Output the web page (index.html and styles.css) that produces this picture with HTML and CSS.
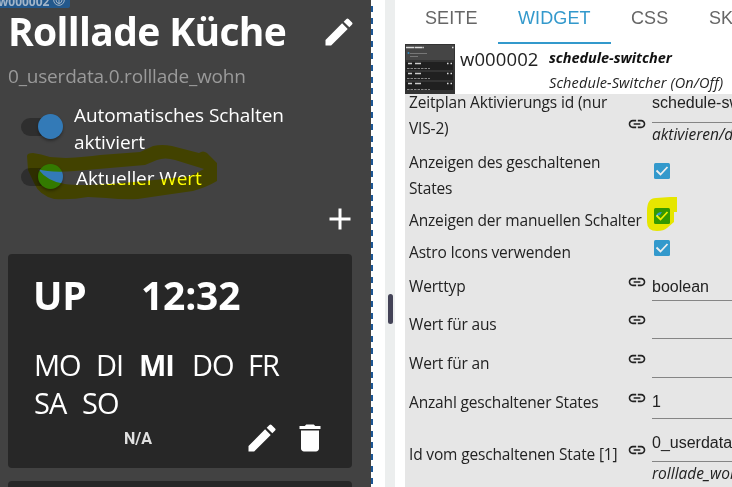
FILE: index.html
```html
<!DOCTYPE html>
<html lang="de">
<head>
<meta charset="utf-8">
<title>Schedule-Switcher</title>
<link rel="stylesheet" href="styles.css">
</head>
<body>
<svg class="defs" width="0" height="0">
  <symbol id="pencil" viewBox="0 0 24 24"><path d="M3 17.25V21h3.75L17.81 9.94l-3.75-3.75L3 17.25zM20.71 7.04a1 1 0 0 0 0-1.41l-2.34-2.34a1 1 0 0 0-1.41 0l-1.83 1.83 3.75 3.75 1.83-1.83z"/></symbol>
  <symbol id="trash" viewBox="0 0 24 24"><path d="M6 19c0 1.100.9 2 2 2h8c1.100 0 2-.9 2-2V7H6v12zM19 4h-3.500l-1-1h-5l-1 1H5v2h14V4z"/></symbol>
  <symbol id="plus" viewBox="0 0 24 24"><path d="M19 13h-6v6h-2v-6H5v-2h6V5h2v6h6v2z"/></symbol>
  <symbol id="link" viewBox="0 0 24 24"><path d="M3.900 12c0-1.710 1.390-3.100 3.100-3.100h4V7H7c-2.760 0-5 2.240-5 5s2.240 5 5 5h4v-1.900H7c-1.710 0-3.100-1.390-3.100-3.100zM8 13h8v-2H8v2zm9-6h-4v1.900h4c1.710 0 3.100 1.390 3.100 3.100s-1.390 3.100-3.100 3.100h-4V17h4c2.760 0 5-2.240 5-5s-2.240-5-5-5z"/></symbol>
</svg>
<div class="app">
  <section class="widget">
    <div class="badge"><span>w000002</span><svg viewBox="0 0 14 14"><circle cx="7" cy="7" r="5.300"/><path d="M7 3v8M4 7q0 3 3 3.500Q10 10 10 7"/></svg></div>
    <header class="head"><h1>Rolllade Küche</h1><svg class="ico"><use href="#pencil"/></svg></header>
    <div class="oid">0_userdata.0.rolllade_wohn</div>
    <div class="toggle first"><i class="switch"></i><span>Automatisches Schalten<br>aktiviert</span></div>
    <div class="toggle second"><i class="switch"></i><span>Aktueller Wert</span></div>
    <div class="add"><svg class="ico"><use href="#plus"/></svg></div>
    <article class="card">
      <div class="trigger"><b class="action">UP</b><b class="time">12:32</b></div>
      <div class="days"><div><span class="mo">MO</span><span class="di">DI</span><b class="mi">MI</b><span class="do">DO</span><span class="fr">FR</span></div><div><span class="sa">SA</span><span class="so">SO</span></div></div>
      <div class="actions"><span class="na">N/A</span><svg class="ico"><use href="#pencil"/></svg><svg class="ico del"><use href="#trash"/></svg></div>
    </article>
    <article class="card next"></article>
    <svg class="marker" viewBox="0 0 240 120"><path fill-rule="evenodd" d="M27 56Q27 53 33 53Q41 54 50 57L66 58Q85 57 100 55L140 52Q147 49 153 46Q162 44 172 46L199 53Q203 50 207 53L217 63V81Q207 87 193 91L165 95L138 99Q125 100 106 98L88 97Q72 100 54 99Q39 95 34 83L28 70ZM38 69Q50 73 75 71L110 68L145 65L157 60Q165 57 175 60L204 69L190 76L163 79L145 81L110 84Q80 86 65 84Q48 82 38 69Z"/></svg>
  </section>
  <div class="dash"></div>
  <div class="gutter"><i></i></div>
  <aside class="panel">
    <nav class="tabs"><span class="t1">SEITE</span><span class="t2">WIDGET</span><span class="t3">CSS</span><span class="t4">SKRIPTE</span></nav>
    <div class="info">
      <svg class="thumb" viewBox="0 0 50 50"><path fill="#333" d="M0 0h50v50H0z"/><path fill="#454545" d="M1 1h48v15H1z"/><path fill="#202020" d="M1 18h47v8H1zM1 28h47v8H1zM1 38h47v8H1z"/><path stroke="#ddd" stroke-width="1.500" stroke-dasharray="8 .6" d="M1 3.500h18"/><path stroke="#ccc" stroke-width="1.300" stroke-dasharray="4 3 6 30" d="M3 19.500h20M3 29.500h20M3 39.500h20"/><path stroke="#888" stroke-dasharray="2.500 1" d="M2 24.500h23M2 34.500h23M2 45.500h23"/><path stroke="#777" d="M5 9.500h17M5 12.500h8"/><path stroke="#ddd" stroke-width="1.500" stroke-dasharray="1.500 2" d="M42 19.500h5M42 29.500h5M42 39.500h5M47 3.500h2"/><circle cx="3.500" cy="9" r="1" fill="#38b"/></svg>
      <span class="wid">w000002</span>
      <div class="names"><b>schedule-switcher</b><span>Schedule-Switcher (On/Off)</span></div>
    </div>
    <div class="form">
      <div class="row r1"><label>Zeitplan Aktivierungs id (nur<br>VIS-2)</label><svg class="link"><use href="#link"/></svg><div class="field"><div class="val">schedule-switcher</div><em>aktivieren/deaktivieren</em></div></div>
      <div class="row r2"><label>Anzeigen des geschaltenen<br>States</label><span></span><svg class="check" viewBox="0 0 16 16"><rect width="16" height="16" rx="1.500"/><path d="M2.500 7.500l4 4L13.500 4"/></svg></div>
      <div class="row r3"><label>Anzeigen der manuellen Schalter</label><span></span><svg class="check" viewBox="0 0 16 16"><rect width="16" height="16" rx="1.500"/><path d="M2.500 7.500l4 4L13.500 4"/></svg></div>
      <div class="row r4"><label>Astro Icons verwenden</label><span></span><svg class="check" viewBox="0 0 16 16"><rect width="16" height="16" rx="1.500"/><path d="M2.500 7.500l4 4L13.500 4"/></svg></div>
      <div class="row r5"><label>Werttyp</label><svg class="link"><use href="#link"/></svg><div class="field"><div class="val">boolean</div></div></div>
      <div class="row r6"><label>Wert für aus</label><svg class="link"><use href="#link"/></svg><div class="field"><div class="val"></div></div></div>
      <div class="row r7"><label>Wert für an</label><svg class="link"><use href="#link"/></svg><div class="field"><div class="val"></div></div></div>
      <div class="row r8"><label>Anzahl geschaltener States</label><svg class="link"><use href="#link"/></svg><div class="field"><div class="val">1</div></div></div>
      <div class="row r9"><label>Id vom geschaltenen State [1]</label><svg class="link"><use href="#link"/></svg><div class="field"><div class="val">0_userdata.0</div><em>rolllade_wohn</em></div></div>
    </div>
    <svg class="marker2" viewBox="0 0 31 36"><path fill-rule="evenodd" d="M0 14Q0 1 9 1L23 0H30V15H27V25L20 31Q17 34 10 34Q0 34 0 25ZM9 19Q10 15 15 15L13 18Z"/></svg>
  </aside>
</div>
</body>
</html>
```
FILE: styles.css
```css
* { box-sizing: border-box; }
body { margin: 0; background: #fff; font-family: "Open Sans", "Noto Sans", sans-serif; }
.defs { position: absolute; }
.app { display: flex; width: 732px; height: 487px; overflow: hidden; white-space: nowrap; }
.ico { width: 36px; height: 36px; fill: #fff; flex: none; }

/* widget preview */
.widget { position: relative; width: 371px; height: 487px; flex: none; background: #424242; color: #fff; overflow: hidden; isolation: isolate; }
.badge { height: 8px; width: 70px; background: #23588c; color: #a3b5c8; border-radius: 0 0 2px 0; display: flex; align-items: flex-end; overflow: hidden; font: bold 12px/14px "Open Sans", sans-serif; }
.badge span { width: 52px; margin: 0 0 -1px -2px; flex: none; }
.badge svg { width: 14px; height: 14px; flex: none; margin: 0 0 1px 2px; fill: none; stroke: #a3b5c8; }
.head { display: flex; height: 48px; padding: 0 14px 0 8px; justify-content: space-between; }
.head h1 { margin: -4px 0 0; font-size: 39px; line-height: 54px; font-weight: 700; letter-spacing: -0.65px; }
.head .ico { margin-top: 6px; }
.oid { height: 44px; padding-left: 8px; font-size: 19px; line-height: 41px; color: #9a9a9a; letter-spacing: -0.2px; }
.toggle { display: flex; padding-left: 21px; font-size: 19px; line-height: 27px; letter-spacing: -0.08px; }
.first { height: 64px; margin-top: 2px; }
.second { height: 38px; }
.second span { margin-top: -1px; }
.switch { display: flow-root; width: 36px; height: 18px; margin: 16px 17px 0 0; border-radius: 9px; background: #2e2e2e; flex: none; }
.switch::after { content: ""; display: block; width: 25px; height: 25px; margin: -4px 0 0 17px; border-radius: 50%; background: #337ab7; box-shadow: 0 2px 3px #0005; }
.second .switch { margin: 2px 19px 0 0; }
.add { display: flex; justify-content: flex-end; height: 50px; padding-right: 13px; }
.add .ico { margin-top: -3px; }
.card { height: 214px; margin: 0 19px 13px 8px; padding: 17px 26px 0; border-radius: 4px; background: #272727; }
.trigger { display: flex; font-size: 39px; line-height: 48px; letter-spacing: -0.2px; }
.action { width: 108px; margin-left: -1px; }
.days { margin-top: 27px; font-size: 29px; line-height: 38px; letter-spacing: -1px; }
.days div { display: flex; }
.mo { width: 62px; } .di { width: 43px; } .mi { width: 53px; } .do { width: 56px; } .sa { width: 48px; }
.mi { font-weight: 700; }
.actions { display: flex; align-items: center; margin-top: -2px; }
.na { width: 31px; margin: 2px 89px 0 90px; flex: none; font: bold 16px/24px Roboto, sans-serif; color: #e0e0e0; }
.del { margin-left: 12px; }
.marker { position: absolute; left: 0; top: 100px; width: 240px; height: 120px; fill: #ff0; mix-blend-mode: multiply; }
.dash { width: 2px; height: 487px; flex: none; background: repeating-linear-gradient(#fff 0 6px, #1d5796 6px 12px, #fff 12px 11.8px); background: repeating-linear-gradient(#fff 0 5.8px, #1d5796 5.8px 11.8px); }
.gutter { width: 10px; margin: 0 10px 0 12px; flex: none; background: #eceeee; }
.gutter i { display: block; width: 5px; height: 30px; margin: 294px 0 0 3px; border-radius: 3px; background: #444357; }

/* attribute panel */
.panel { position: relative; width: 327px; flex: none; overflow: hidden; isolation: isolate; background: #fff; color: #222; }
.tabs { display: flex; height: 44px; font: 18px/36px "Liberation Sans", sans-serif; letter-spacing: .1px; color: #666; }
.tabs span { flex: none; }
.t1 { width: 93px; padding-left: 20px; }
.tabs .t2 { width: 113px; padding-left: 20px; color: #3399cc; border-bottom: 2px solid #3399cc; }
.t3 { width: 98px; padding-left: 20px; }
.info { display: flex; height: 50px; }
.thumb { width: 50px; height: 50px; flex: none; }
.wid { width: 94px; padding-left: 5px; font-size: 18.5px; line-height: 30px; letter-spacing: .1px; flex: none; }
.names { display: flex; flex-direction: column; font-size: 14.500px; font-style: italic; line-height: 24px; }
.names span { letter-spacing: .12px; }
.names b { line-height: 27px; color: #111; letter-spacing: -0.05px; }
.form { height: 393px; background: #e6e6e6; overflow: hidden; font-size: 16px; }
.row { display: grid; grid-template-columns: 222px 25px 1fr; align-items: start; }
label { padding-left: 4px; font-size: 15.5px; line-height: 26px; letter-spacing: -0.16px; }
.link { width: 20px; height: 20px; fill: #222; }
.field { font-family: "Liberation Sans", sans-serif; }
.val { height: 28px; line-height: 28px; border-bottom: 1px solid #858585; }
.field em { display: block; font: italic 15.5px/23px "Open Sans", sans-serif; }
.check { width: 16px; height: 16px; margin-left: 2px; }
.check rect { fill: #3399cc; }
.check path { fill: none; stroke: #eee; stroke-width: 1.800; }
.r1 { height: 55px; } .r1 label { margin-top: -5px; } .r1 .link { margin-top: 20px; } .r1 .val { margin-top: -6px; height: 35px; line-height: 30px; }
.r2 { height: 58px; } .r2 .check { margin-top: 14px; }
.r3 { height: 32px; } .r3 .check { margin-top: 1px; }
.r4 { height: 34px; } .r4 .check { margin-top: 1px; }
.r5 { height: 38px; } .r5 .link { margin-top: -1px; }
.r6 { height: 39px; } .r6 .link { margin-top: -1px; }
.r7 { height: 39px; } .r7 .link { margin-top: -1px; }
.r8 { height: 45px; } .r8 .link { margin-top: -1px; } .r8 .val { height: 30px; line-height: 25px; }
.r9 { height: 60px; } .r9 label { margin-top: 7px; } .r9 .link { margin-top: 6px; } .r9 .val { height: 37px; line-height: 36px; margin-top: -9px; }
.marker2 { position: absolute; left: 242px; top: 197px; width: 31px; height: 36px; fill: #ff0; mix-blend-mode: multiply; }
```
